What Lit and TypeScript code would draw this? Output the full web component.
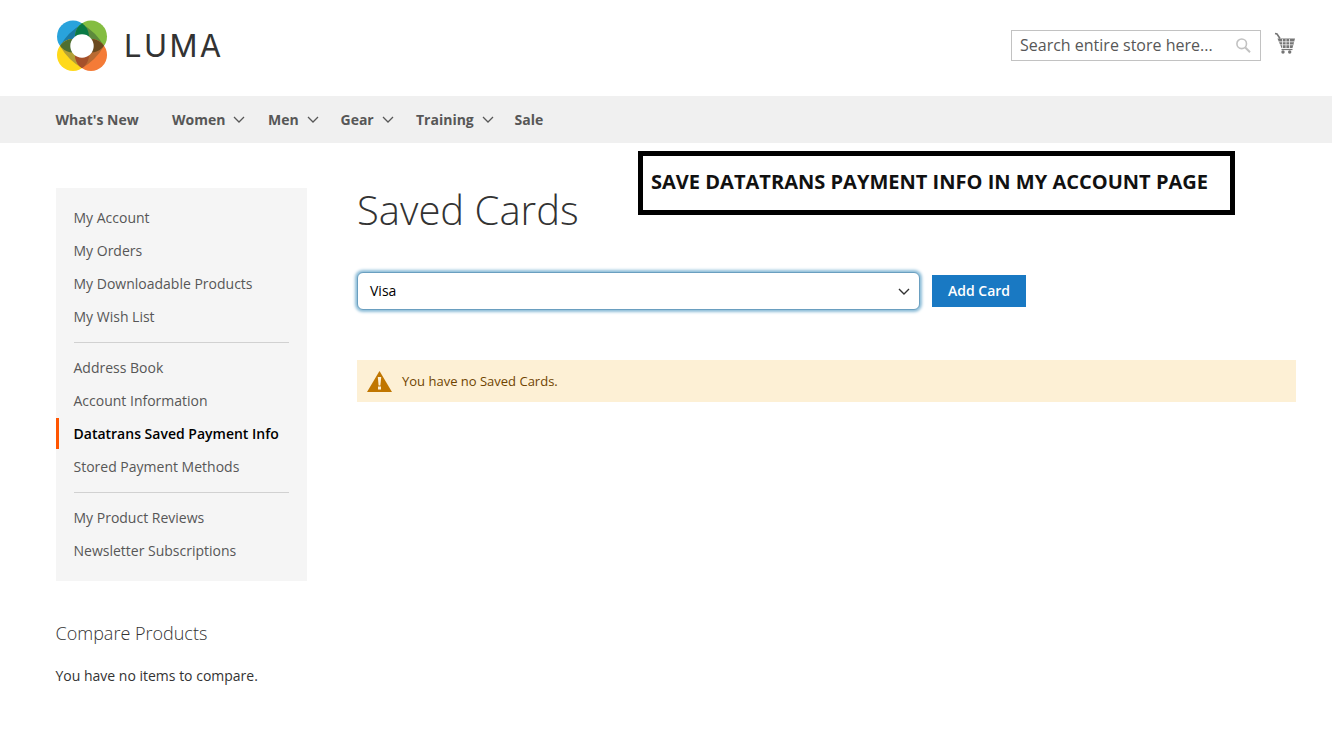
import { LitElement, html, css, svg } from "lit";
import { customElement } from "lit/decorators.js";

const chevron = (w: number, h: number, color: string, sw = 1.3) => html`<svg class="chev" width=${w} height=${h} viewBox="0 0 12 7" fill="none" stroke=${color} stroke-width=${sw}><path d="M1 1l5 5 5-5"/></svg>`;

const circles = [
  { id: "b", x: 16, y: 16.5, c: "#29a3dc", d: "#1c7aa3" },
  { id: "g", x: 34, y: 16.5, c: "#84bd41", d: "#5d8a3c" },
  { id: "y", x: 16, y: 35, c: "#ffd91a", d: "#b3a036" },
  { id: "o", x: 34, y: 35, c: "#f47b37", d: "#b86a32" },
];
const petals = [
  { a: 0, b: 1, c: "#0a7a45" },
  { a: 0, b: 2, c: "#4f6f30" },
  { a: 2, b: 3, c: "#a5502a" },
  { a: 1, b: 3, c: "#6b4a1f" },
];

@customElement("app-root")
export class AppRoot extends LitElement {
  static styles = css`
    :host { display: block; position: relative; width: 1332px; height: 732px; overflow: hidden; background: #fff; font-family: "Open Sans", sans-serif; color: #333; font-size: 14px; }
    * { box-sizing: border-box; }
    .header { height: 96px; display: flex; align-items: flex-start; justify-content: space-between; padding: 20px 36px 0 57px; }
    .logo { display: flex; align-items: center; gap: 16px; height: 51px; }
    .word { font-family: "Inter", sans-serif; font-size: 31px; letter-spacing: 2.4px; color: #333; font-weight: 400; line-height: 51px; padding-bottom: 1px; }
    .tools { display: flex; align-items: flex-start; gap: 13px; padding-top: 10px; }
    .search { width: 250px; height: 31px; border: 1px solid #c2c2c2; display: flex; align-items: center; justify-content: space-between; padding: 0 9px 0 8px; font-size: 16px; color: #575757; }
    .search span { padding-bottom: 2px; }
    .cart { margin-top: 2px; display: block; }
    .nav { height: 47px; background: #f0f0f0; display: flex; align-items: center; padding: 0 0 0 55.5px; font-weight: 700; color: #575757; font-size: 14px; }
    .nav span { display: flex; align-items: center; }
    .nav .chev { margin-left: 8px; }
    .n1 { width: 116.5px; }
    .n2 { width: 96px; }
    .n3 { width: 72.5px; }
    .n4 { width: 75.5px; }
    .n5 { width: 98.5px; }
    .body { display: flex; padding: 45px 36px 0 56px; }
    .side { width: 251px; margin-right: 50px; flex: none; }
    .menu { background: #f5f5f5; height: 393px; padding: 13px 0 0; color: #575757; }
    .item { height: 33px; line-height: 33px; padding-left: 17.5px; position: relative; white-space: nowrap; }
    .item.active { color: #000; font-weight: 600; }
    .item.active::before { content: ""; position: absolute; left: 0; top: 1px; bottom: 1px; width: 3px; background: #ff5501; }
    .sep { height: 1px; background: #d1d1d1; margin: 9px 18px 8px 18px; }
    .cmp-title { font-size: 18px; font-weight: 300; margin-top: 40px; line-height: 25px; color: #333; margin-left: -0.5px; }
    .cmp-text { margin-top: 20px; line-height: 20px; color: #333; margin-left: -0.5px; }
    .main { flex: 1; min-width: 0; }
    h1 { margin: 0; font-size: 40px; font-weight: 300; line-height: 44px; color: #333; }
    .row { display: flex; align-items: center; gap: 12px; margin-top: 40px; }
    .select { width: 563px; height: 38px; border: 1px solid #6a9fc0; border-radius: 6px; box-shadow: 0 0 3px 2px #8dbdd8; background: #fff; display: flex; align-items: center; justify-content: space-between; padding: 0 9px 2px 12px; color: #000; font-size: 14px; }
    .select .chev { margin-top: 2px; }
    .btn { width: 94px; height: 32px; background: #1979c3; color: #fff; font-weight: 600; font-size: 14px; display: flex; align-items: center; justify-content: center; padding-bottom: 2px; }
    .msg { margin-top: 50px; height: 42px; background: #fdf0d5; color: #6f4400; font-size: 13px; display: flex; align-items: center; gap: 10px; padding-left: 10px; }
    .note { position: absolute; left: 638px; top: 151px; width: 597px; height: 64px; border: 5px solid #000; background: #fff; display: flex; align-items: center; padding: 0 0 4px 8px; font-weight: 700; font-size: 20.05px; color: #111; white-space: nowrap; }
  `;

  private logo() {
    const diamond = "M25 4 Q39 12 47 26 Q39 40 25 48 Q11 40 3 26 Q11 12 25 4Z";
    return html`<svg width="51" height="51" viewBox="0 0 51 51">
      <defs>
        ${circles.map((k) => svg`<clipPath id="clip-${k.id}"><circle cx=${k.x} cy=${k.y} r="16"/></clipPath>`)}
      </defs>
      ${circles.map((k) => svg`<circle cx=${k.x} cy=${k.y} r="16" fill=${k.c}/>
        <path d=${diamond} fill=${k.d} clip-path="url(#clip-${k.id})"/>`)}
      ${petals.map((p) => {
        const a = circles[p.a];
        const b = circles[p.b];
        return svg`<circle cx=${a.x} cy=${a.y} r="16" fill=${p.c} clip-path="url(#clip-${b.id})"/>`;
      })}
      <circle cx="25" cy="26" r="11.7" fill="#fff"/>
    </svg>`;
  }

  render() {
    const group1 = ["My Account", "My Orders", "My Downloadable Products", "My Wish List"];
    const group3 = ["My Product Reviews", "Newsletter Subscriptions"];
    return html`
      <div class="header">
        <div class="logo">${this.logo()}<span class="word">LUMA</span></div>
        <div class="tools">
          <div class="search"><span>Search entire store here...</span>
            <svg width="16" height="16" viewBox="0 0 16 16" fill="none" stroke="#c2c2c2" stroke-width="1.6"><circle cx="6.7" cy="5.800" r="4.800"/><path d="M10.300 9.500L15 14.300" stroke-width="2"/></svg>
          </div>
          <svg class="cart" width="22" height="22" viewBox="0 0 22 22" fill="none"><path d="M1 1.500l2 .5 3 4.500" stroke="#757575" stroke-width="1.600"/><path d="M3.500 6.500H21l-2.500 9.500H7.500z" fill="#757575"/><path d="M8.500 7v9M12 7v9M15.500 7v9M5 9.800h15M6 12.800h13" stroke="#f2f2f2" stroke-width=".8"/><path d="M7.500 17.500h11" stroke="#757575" stroke-width="1.200"/><circle cx="9" cy="20" r="1.700" fill="#757575"/><circle cx="15.700" cy="20" r="1.700" fill="#757575"/></svg>
        </div>
      </div>
      <div class="nav">
        <span class="n1">What's New</span>
        <span class="n2">Women${chevron(12, 7, "#575757")}</span>
        <span class="n3">Men${chevron(12, 7, "#575757")}</span>
        <span class="n4">Gear${chevron(12, 7, "#575757")}</span>
        <span class="n5">Training${chevron(12, 7, "#575757")}</span>
        <span>Sale</span>
      </div>
      <div class="body">
        <div class="side">
          <div class="menu">
            ${group1.map((t) => html`<div class="item">${t}</div>`)}
            <div class="sep"></div>
            <div class="item">Address Book</div>
            <div class="item">Account Information</div>
            <div class="item active">Datatrans Saved Payment Info</div>
            <div class="item">Stored Payment Methods</div>
            <div class="sep"></div>
            ${group3.map((t) => html`<div class="item">${t}</div>`)}
          </div>
          <div class="cmp-title">Compare Products</div>
          <div class="cmp-text">You have no items to compare.</div>
        </div>
        <div class="main">
          <h1>Saved Cards</h1>
          <div class="row">
            <div class="select"><span>Visa</span>${chevron(12, 7, "#333", 1.4)}</div>
            <div class="btn">Add Card</div>
          </div>
          <div class="msg">
            <svg width="25" height="21" viewBox="0 0 25 21"><path d="M12.500 0L25 21H0z" fill="#c07600"/><path d="M10.800 6h3.400l-.8 8.500h-1.800z" fill="#fdf0d5"/><rect x="11" y="15.500" width="3" height="3" fill="#fdf0d5"/></svg>
            <span>You have no Saved Cards.</span>
          </div>
        </div>
      </div>
      <div class="note">SAVE DATATRANS PAYMENT INFO IN MY ACCOUNT PAGE</div>
    `;
  }
}
